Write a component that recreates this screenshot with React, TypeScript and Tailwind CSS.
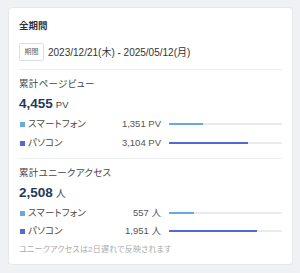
import React from "react";

const F = "font-['Liberation_Sans','Noto_Sans_CJK_JP',sans-serif]";

function Row({ color, label, value, unit, pct }: { color: string; label: string; value: string; unit: string; pct: number }) {
  return (
    <div className="flex items-center h-[14px]">
      <div className="w-[142px] flex items-center justify-between">
        <div className="flex items-center gap-[3px] pl-[1px]">
          <span className={`w-[5px] h-[5px] ${color === "sp" ? "bg-[#6aa9de]" : "bg-[#5468cf]"}`} />
          <span className="text-[9.5px] text-[#4a4a4a] [font-feature-settings:'palt'] tracking-[0.1px]">{label}</span>
        </div>
        <span className="text-[9.5px] text-[#555]">{value} {unit}</span>
      </div>
      <div className="ml-[8px] flex-1 h-[2px] bg-[#e8eaed]">
        <div className={`h-[2px] ${color === "sp" ? "bg-[#6aa9de]" : "bg-[#5468cf]"}`} style={{ width: `${pct}%` }} />
      </div>
    </div>
  );
}

export default function App() {
  return (
    <div className={`w-[300px] h-[273px] bg-[#eff1f4] pt-[7px] pl-[8px] pr-[7px] ${F}`}>
      <div className="bg-white border border-[#e4e7eb] rounded-[4px] h-[258px] px-[10px] pt-[10px]">
        <div className="text-[9.5px] font-bold text-[#333] leading-[16px]">全期間</div>
        <div className="mt-[9px] flex items-center h-[18px]">
          <span className="h-[18px] w-[25px] border border-[#dcdfe3] rounded-[2px] flex items-center justify-center text-[7px] text-[#666]">期間</span>
          <span className="ml-[4px] text-[10px] text-[#333]">2023/12/21(木) - 2025/05/12(月)</span>
        </div>
        <div className="mt-[8px] h-px bg-[#eceef0]" />

        <div className="mt-[6px] text-[9.5px] text-[#444] leading-[16px] [font-feature-settings:'palt'] tracking-[0.3px]">累計ページビュー</div>
        <div className="mt-[2px] h-[20px] flex items-baseline gap-[3px] leading-[20px]">
          <span className="text-[13.5px] font-bold text-[#1f3a5c]">4,455</span>
          <span className="text-[9.5px] text-[#444]">PV</span>
        </div>
        <div className="mt-[3px] flex flex-col gap-[5px]">
          <Row color="sp" label="スマートフォン" value="1,351" unit="PV" pct={30.3} />
          <Row color="pc" label="パソコン" value="3,104" unit="PV" pct={69.7} />
        </div>
        <div className="mt-[8px] h-px bg-[#eceef0]" />

        <div className="mt-[6px] text-[9.5px] text-[#444] leading-[16px] [font-feature-settings:'palt'] tracking-[0.3px]">累計ユニークアクセス</div>
        <div className="mt-[2px] h-[20px] flex items-baseline gap-[3px] leading-[20px]">
          <span className="text-[13.5px] font-bold text-[#1f3a5c]">2,508</span>
          <span className="text-[10px] text-[#444]">人</span>
        </div>
        <div className="mt-[3px] flex flex-col gap-[4px]">
          <Row color="sp" label="スマートフォン" value="557" unit="人" pct={22.2} />
          <Row color="pc" label="パソコン" value="1,951" unit="人" pct={77.8} />
        </div>
        <div className="mt-[5px] text-[8px] text-[#aaa] leading-[14px] [font-feature-settings:'palt'] tracking-[0.2px]">ユニークアクセスは2日遅れで反映されます</div>
      </div>
    </div>
  );
}
